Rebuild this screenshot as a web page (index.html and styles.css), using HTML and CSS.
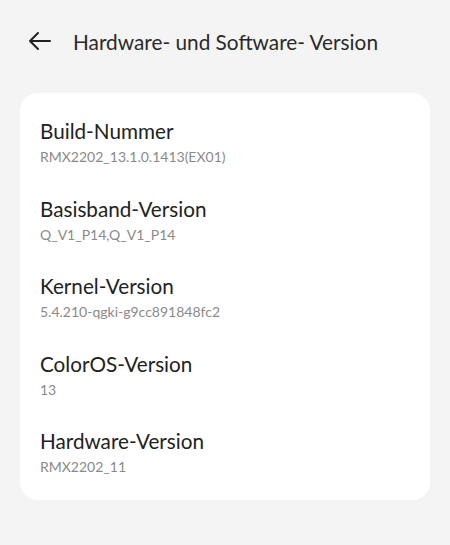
FILE: index.html
```html
<!DOCTYPE html>
<html>
<head>
<meta charset="utf-8">
<link rel="stylesheet" href="styles.css">
</head>
<body>
<div class="header">
  <svg class="back" width="24" height="20" viewBox="0 0 24 20"><path d="M22 10H2M10 2L2 10l8 8" fill="none" stroke="#222" stroke-width="2" stroke-linecap="round" stroke-linejoin="round"/></svg>
  <div class="title">Hardware- und Software- Version</div>
</div>
<div class="card">
  <div class="item"><div class="label">Build-Nummer</div><div class="value">RMX2202_13.1.0.1413(EX01)</div></div>
  <div class="item"><div class="label">Basisband-Version</div><div class="value">Q_V1_P14,Q_V1_P14</div></div>
  <div class="item"><div class="label">Kernel-Version</div><div class="value">5.4.210-qgki-g9cc891848fc2</div></div>
  <div class="item"><div class="label">ColorOS-Version</div><div class="value">13</div></div>
  <div class="item"><div class="label">Hardware-Version</div><div class="value">RMX2202_11</div></div>
</div>
</body>
</html>
```
FILE: styles.css
```css
html, body { margin: 0; padding: 0; }
body {
  background: #f4f4f4;
  width: 450px;
  height: 545px;
  font-family: Lato, "Noto Sans", sans-serif;
  color: #222;
  overflow: hidden;
}
.header {
  display: flex;
  align-items: center;
  height: 30px;
  padding: 26px 0 0 28px;
}
.back { margin-right: 21px; }
.title { font-size: 20.8px; color: #2a2a2a; }
.card {
  margin: 37px 20px 0 20px;
  background: #fff;
  border-radius: 18px;
  padding: 24px 20px 23px 20px;
  display: flex;
  flex-direction: column;
  gap: 27.5px;
}
.label { font-size: 20.7px; line-height: 28px; color: #222; }
.value { font-size: 14px; line-height: 20px; color: #8a8a8a; margin-top: 2px; }
```
